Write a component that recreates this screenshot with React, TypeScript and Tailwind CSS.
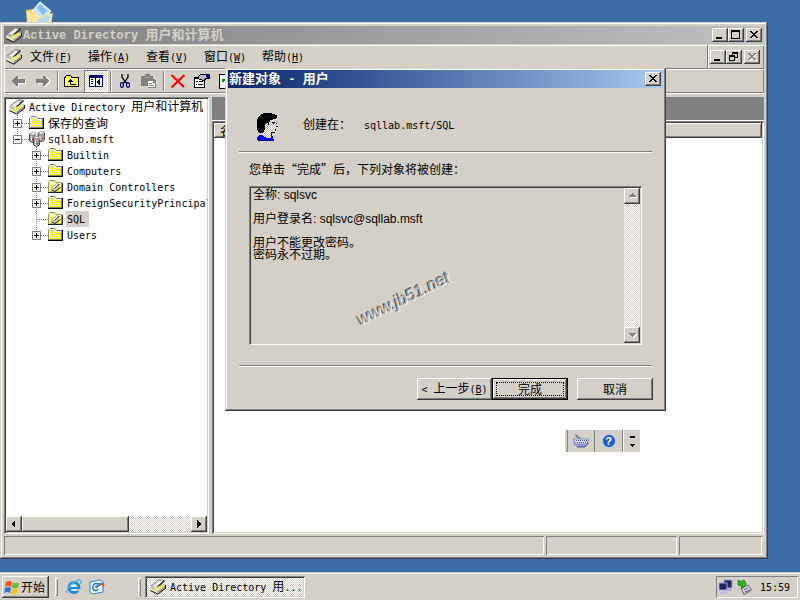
import type { ReactNode } from "react"

const RAISED = "bg-[#d4d0c8] shadow-[inset_-1px_-1px_#404040,inset_1px_1px_#fff,inset_-2px_-2px_#808080]"
const FRAME = "bg-[#d4d0c8] shadow-[inset_-1px_-1px_#404040,inset_1px_1px_#d4d0c8,inset_-2px_-2px_#808080,inset_2px_2px_#fff]"
const SUNKEN = "shadow-[inset_1px_1px_#808080,inset_-1px_-1px_#fff,inset_2px_2px_#404040,inset_-2px_-2px_#d4d0c8]"
const THIN_SUNKEN = "shadow-[inset_1px_1px_#808080,inset_-1px_-1px_#fff]"
const THIN_RAISED = "shadow-[inset_1px_1px_#fff,inset_-1px_-1px_#808080]"
const CHECKER = "bg-[repeating-conic-gradient(#fff_0_25%,#d4d0c8_0_50%)] bg-[length:2px_2px]"

// Latin runs are half the width of a Chinese character
function Text({ children, bold }: { children: string; bold?: boolean }) {
  return (
    <span className={bold ? "text-[13px] font-bold whitespace-pre" : "text-xs leading-4 whitespace-pre"}>
      {children.split(/([\x20-\x7e]+)/).map((part, i) =>
        i % 2 ? (
          <span key={i} className={bold ? "font-['Liberation_Mono',monospace] text-xs" : "font-['DejaVu_Sans_Mono',monospace] text-[10px]"}>
            {part}
          </span>
        ) : (
          part
        )
      )}
    </span>
  )
}

function Accel({ label, accel }: { label: string; accel: string }) {
  return (
    <span className="whitespace-nowrap">
      <Text>{label}</Text>
      <span className="font-['DejaVu_Sans_Mono',monospace] text-[10px]">
        (<u>{accel}</u>)
      </span>
    </span>
  )
}

function Svg({ children, size = "size-4", box = "0 0 16 16" }: { children: ReactNode; size?: string; box?: string }) {
  return (
    <svg viewBox={box} className={`${size} shrink-0`} shapeRendering="crispEdges" aria-hidden="true">
      {children}
    </svg>
  )
}

function DirectoryIcon() {
  return (
    <svg viewBox="0 0 16 16" className="size-4 shrink-0" aria-hidden="true">
      <path d="M1 7.500 9 1 14 1.500 7.500 8Z" fill="#c8c8c8" />
      <path d="M3 7 9.500 1.800 12.500 2 6 7.500Z" fill="#f4f4f4" />
      <path d="M1 7 9 .8 14 1.300" fill="none" stroke="#808080" />
      <path d="M14.500 1.500 7.500 8.200" stroke="#222" strokeWidth="1.300" />
      <path d="M0 9 2 7.500 7 9 13.500 5 15.500 6V9L8 15 0 11.500Z" fill="#b8b8b8" />
      <path d="M4 9.800 12.500 5.600 14.500 7 8 12Z" fill="#f2e83c" />
      <path d="M6 10.500 13 6.500M8 11 14 7" stroke="#fff" strokeWidth=".9" strokeDasharray="1 1" />
      <path d="M.5 9V11L7.500 14V12Z" fill="#f0f0f0" />
      <path d="M2.500 10.500 6.500 12.300" stroke="#f2e83c" />
      <path d="M8 12.500 15 7.500V9L8 14Z" fill="#909090" />
      <path d="M.5 11.700 7.800 15.200 15.500 9.300V6" fill="none" stroke="#111" />
    </svg>
  )
}

function FolderIcon() {
  return (
    <Svg>
      <pattern id="folder-hatch" width="2" height="2" patternUnits="userSpaceOnUse">
        <rect width="2" height="2" fill="#ff0" />
        <rect width="1" height="1" fill="#dcd8b0" />
        <rect x="1" y="1" width="1" height="1" fill="#dcd8b0" />
      </pattern>
      <path d="M0 3H1V2H2V1H7V2H8V3H14V13H0Z" fill="#808080" />
      <path d="M1 3H2V2H7V3H8V4H13V12H1Z" fill="#fff" />
      <path d="M2 3H7V5H13V12H2Z" fill="url(#folder-hatch)" />
      <path d="M0 13H14V3H15V14H0Z" fill="#000" />
    </Svg>
  )
}

function UnitIcon() {
  return (
    <svg viewBox="0 0 16 16" className="size-4 shrink-0" aria-hidden="true">
      <path d="M.5 12.500V3.500L2 1.500H7L8.500 3.500H13.500V13H.5Z" fill="#fbf48c" stroke="#9a9648" />
      <path d="M1.500 12V4.500H13" fill="none" stroke="#fffde0" />
      <path d="M0 13.500H14.500V4" fill="none" stroke="#222" />
      <path d="M3.500 9.500 8 5H11L12.500 8 7 12.500 3.500 11Z" fill="#d4d4d4" />
      <path d="M3.500 9 8 5H11L6.500 9.500Z" fill="#fff" stroke="#777" strokeWidth=".6" />
      <path d="M11.300 5 6.800 9.500M3.500 11 7 12.500 12.500 8.500" fill="none" stroke="#222" />
      <path d="M7 10.500 11 7.500" stroke="#e8d800" strokeWidth="1.200" />
    </svg>
  )
}

function DomainIcon() {
  return (
    <svg viewBox="0 0 16 16" className="size-4 shrink-0" aria-hidden="true">
      {["M.5 3V10L3 11.500 6 10.500V3Z", "M9 2V9L12 11 15.500 9V2Z", "M4.500 6.500V14L7.500 15.500 10.500 14V6.500Z"].map((d) => (
        <path key={d} d={d} fill="#a0a0a0" stroke="#333" strokeWidth=".8" />
      ))}
      <path d="M.5 3 3 1H6.500V3L4 4.500ZM9 2 12 .5 15.500 1V2L12 3.500ZM4.500 6.500 7 5 10.500 6.500 8 8Z" fill="#eee" stroke="#777" strokeWidth=".6" />
      <path d="M2.500 5V10M6.500 9V14M11 5V9" stroke="#e8e8e8" />
      <path d="M3 8.500H4.500M8 12.500H9.500M13 7.500H14" stroke="#d00" />
    </svg>
  )
}

type Glyph = "min" | "max" | "restore" | "close"
const GLYPHS: Record<Glyph, ReactNode> = {
  min: <path d="M4 9H10V11H4Z" />,
  max: <path fillRule="evenodd" d="M3 2H12V11H3ZM4 4H11V10H4Z" />,
  restore: <path fillRule="evenodd" d="M6 2H12V8H9V11H3V5H6ZM7 4V5H9V7H11V4ZM4 7V10H8V7Z" />,
  close: <path d="M4 3H6V4H7V5H9V4H10V3H12V4H11V5H10V6H9V7H10V8H11V9H12V10H10V9H9V8H7V9H6V10H4V9H5V8H6V7H7V6H6V5H5V4H4Z" />,
}

function CaptionButton({ glyph, label, disabled }: { glyph: Glyph; label: string; disabled?: boolean }) {
  return (
    <button aria-label={label} disabled={disabled} className={`h-3.5 w-4 shrink-0 ${RAISED}`}>
      <svg viewBox="0 0 16 14" className="h-3.5 w-4" shapeRendering="crispEdges">
        {disabled && <g fill="#fff" transform="translate(1 1)">{GLYPHS[glyph]}</g>}
        <g fill={disabled ? "#808080" : "#000"}>{GLYPHS[glyph]}</g>
      </svg>
    </button>
  )
}

function ScrollButton({ points, label, disabled }: { points: string; label: string; disabled?: boolean }) {
  return (
    <button aria-label={label} disabled={disabled} className={`size-4 shrink-0 ${RAISED}`}>
      <Svg>
        {disabled && <polygon points={points} fill="#fff" transform="translate(1 1)" />}
        <polygon points={points} fill={disabled ? "#808080" : "#000"} />
      </Svg>
    </button>
  )
}

const MENUS = [
  ["文件", "F"],
  ["操作", "A"],
  ["查看", "V"],
  ["窗口", "W"],
  ["帮助", "H"],
]

function ToolButton({ label, pressed, children }: { label: string; pressed?: boolean; children: ReactNode }) {
  return (
    <button
      aria-label={label}
      className={`flex h-[22px] w-6 shrink-0 items-center justify-center ${pressed ? `${CHECKER} ${THIN_SUNKEN}` : ""}`}
    >
      {children}
    </button>
  )
}

function Divider() {
  return <div className="mx-[2px] h-5 w-px shrink-0 bg-[#808080] shadow-[1px_0_#fff]" />
}

function Toolbar() {
  return (
    <div className={`flex h-[25px] items-center overflow-hidden border-b border-white pl-[3px] ${THIN_RAISED}`}>
      <ToolButton label="后退">
        <Svg>
          <path d="M3 9H2V8H7V4H8V7H15V11H8V14H7V13H6V12H5V11H4V10H3Z" fill="#fff" />
          <path d="M1 8V7H2V6H3V5H4V4H5V3H7V6H14V10H7V13H5V12H4V11H3V10H2V9H1Z" fill="#808080" />
        </Svg>
      </ToolButton>
      <ToolButton label="前进">
        <Svg>
          <path d="M3 7H10V4H12V5H13V6H14V7H15V10H14V11H13V12H12V13H11V14H9V11H3Z" fill="#fff" />
          <path d="M14 8V7H13V6H12V5H11V4H10V3H8V6H1V10H8V13H10V12H11V11H12V10H13V9H14Z" fill="#808080" />
        </Svg>
      </ToolButton>
      <Divider />
      <ToolButton label="上一级">
        <Svg>
          <path d="M1 4H2V3H3V2H7V3H8V4H15V13H1Z" fill="#ff6" />
          <path fillRule="evenodd" d="M2 3V2H7V3H8V4H15V14H0V4H1V3ZM1 5V13H14V5H7V3H2V5Z" fill="#000" />
          <path d="M6 6H7V7H8V8H9V9H7V11H12V12H6V9H4V8H5V7H6Z" fill="#000" />
        </Svg>
      </ToolButton>
      <ToolButton label="显示/隐藏控制台树" pressed>
        <Svg>
          <path d="M1 2H15V14H1Z" fill="#00007b" />
          <path d="M2 5H7V13H2ZM8 5H14V13H8Z" fill="#fff" />
          <path d="M3 6H5V7H3ZM3 8H5V9H3ZM3 10H5V11H3ZM12 6V12H11V11H10V10H9V8H10V7H11V6Z" fill="#000" />
        </Svg>
      </ToolButton>
      <Divider />
      <ToolButton label="剪切">
        <svg viewBox="0 0 16 16" className="size-4" aria-hidden="true">
          <path d="M5 1V4L9 10M11 1V4L7 10" fill="none" stroke="#000" strokeWidth="1.300" />
          <ellipse cx="5" cy="12" rx="1.500" ry="2.300" fill="none" stroke="#00007b" strokeWidth="1.200" />
          <ellipse cx="11" cy="12" rx="1.500" ry="2.300" fill="none" stroke="#00007b" strokeWidth="1.200" />
          <path d="M6 10 8 8 10 10" fill="none" stroke="#00007b" />
        </svg>
      </ToolButton>
      <ToolButton label="粘贴">
        <Svg>
          <path d="M0 3H4V1H9V3H12V6H14V7H15V15H7V13H0Z" fill="#808080" />
          <path d="M4 4H9V5H4Z" fill="#aaa" />
          <path d="M7 8H12V10H14V14H7Z" fill="#fff" />
          <path d="M8 10H11V11H8ZM8 12H13V13H8Z" fill="#808080" />
        </Svg>
      </ToolButton>
      <Divider />
      <ToolButton label="删除">
        <svg viewBox="0 0 16 16" className="size-4" aria-hidden="true">
          <path d="M1.500 2 14 14M14.500 2 1.500 14.500" fill="none" stroke="#f00" strokeWidth="2" />
        </svg>
      </ToolButton>
      <ToolButton label="属性">
        <Svg>
          <path fillRule="evenodd" d="M0 4H6V5H11V15H0ZM1 6V14H10V6Z" fill="#000" />
          <path d="M1 6H10V14H1Z" fill="#fff" />
          <path d="M2 8H4V9H2ZM5 8H9V9H5ZM2 11H3V12H2ZM4 11H9V12H4Z" fill="#000" />
          <path d="M4 4 7 1H13V5L9 8 7 6H5Z" fill="#bbb" stroke="#000" />
          <path d="M12 1H16V6H13Z" fill="#00007b" />
        </Svg>
      </ToolButton>
      <ToolButton label="刷新">
        <Svg>
          <path d="M1 1H11L14 4V15H1Z" fill="#fff" stroke="#000" />
          <path d="M4 9V6H9V4L12 7 9 10V8H6V9Z" fill="#080" />
        </Svg>
      </ToolButton>
    </div>
  )
}

interface Node {
  name: string
  icon: "folder" | "unit" | "domain"
  level: 1 | 2
  box?: "+" | "-"
  selected?: boolean
}

const NODES: Node[] = [
  { name: "保存的查询", icon: "folder", level: 1, box: "+" },
  { name: "sqllab.msft", icon: "domain", level: 1, box: "-" },
  { name: "Builtin", icon: "folder", level: 2, box: "+" },
  { name: "Computers", icon: "folder", level: 2, box: "+" },
  { name: "Domain Controllers", icon: "unit", level: 2, box: "+" },
  { name: "ForeignSecurityPrincipals", icon: "folder", level: 2, box: "+" },
  { name: "SQL", icon: "unit", level: 2, selected: true },
  { name: "Users", icon: "folder", level: 2, box: "+" },
]

function TreeRow({ node, last }: { node: Node; last: boolean }) {
  return (
    <li className={`flex h-4 items-center ${node.level === 1 ? "pl-[6px]" : "pl-[25px]"}`}>
      <svg viewBox="0 0 17 16" className="h-4 w-[17px] shrink-0" shapeRendering="crispEdges" aria-hidden="true">
        <path d={last || node.box === "-" ? "M5.500 0V8" : "M5.500 0V16"} stroke="#808080" strokeDasharray="1 1" />
        <path d="M6 8.500H17" stroke="#808080" strokeDasharray="1 1" />
        {node.box && (
          <>
            <rect x="1.500" y="4.500" width="8" height="8" fill="#fff" stroke="#808080" />
            <path d={node.box === "+" ? "M3 8.500H8M5.500 6V11" : "M3 8.500H8"} stroke="#000" />
          </>
        )}
      </svg>
      {node.icon === "unit" ? <UnitIcon /> : node.icon === "domain" ? <DomainIcon /> : <FolderIcon />}
      <a href="#" className={`ml-[2px] flex h-4 items-center pr-1 pl-px ${node.selected ? "bg-[#d4d0c8]" : ""}`}>
        <Text>{node.name}</Text>
      </a>
    </li>
  )
}

function Tree() {
  return (
    <div className={`flex w-[205px] shrink-0 flex-col bg-white p-[2px] ${SUNKEN}`}>
      <ul className="flex-1 overflow-hidden">
        <li className="flex h-4 items-center gap-1 pl-[3px]">
          <DirectoryIcon />
          <Text>Active Directory 用户和计算机</Text>
        </li>
        {NODES.map((node, i) => (
          <TreeRow key={node.name} node={node} last={i === NODES.length - 1} />
        ))}
      </ul>
      <div className={`flex h-4 ${CHECKER}`}>
        <ScrollButton label="向左滚动" points="5,8 9,4 9,12" />
        <div className={`w-[107px] ${RAISED}`} />
        <div className="flex-1" />
        <ScrollButton label="向右滚动" points="6,4 10,8 6,12" />
      </div>
    </div>
  )
}

function ConsoleWindow() {
  return (
    <section className={`flex flex-1 flex-col p-1 ${FRAME}`}>
      <header className="flex h-[18px] shrink-0 items-center bg-linear-to-r from-[#808080] to-[#c0c0c0] pr-[2px] pl-[2px] text-[#d4d0c8]">
        <DirectoryIcon />
        <h1 className="ml-px flex-1 leading-4">
          <Text bold>Active Directory 用户和计算机</Text>
        </h1>
        <CaptionButton glyph="min" label="最小化" />
        <CaptionButton glyph="max" label="最大化" />
        <div className="w-[2px]" />
        <CaptionButton glyph="close" label="关闭" />
      </header>
      <div className={`mt-px flex h-6 shrink-0 items-center pl-[2px] ${THIN_RAISED}`}>
        <DirectoryIcon />
        <nav className="flex flex-1">
          {MENUS.map(([label, accel]) => (
            <button key={accel} className="w-[58px]">
              <Accel label={label} accel={accel} />
            </button>
          ))}
        </nav>
        <div className="flex h-full items-center pr-1 pl-[2px] shadow-[inset_1px_0_#fff,-1px_0_#808080]">
          <CaptionButton glyph="min" label="最小化子窗口" />
          <CaptionButton glyph="restore" label="还原子窗口" />
          <div className="w-[2px]" />
          <CaptionButton glyph="close" label="关闭子窗口" disabled />
        </div>
      </div>
      <Toolbar />
      <div className="mt-[3px] flex min-h-0 flex-1 gap-[3px]">
        <Tree />
        <div className="flex flex-1 flex-col">
          <div className="h-6 border-b border-white bg-[#808080]" />
          <div className={`flex-1 bg-white p-[2px] ${SUNKEN}`}>
            <table className="w-full border-collapse">
              <thead>
                <tr>
                  <th className={`h-[15px] p-0 pl-1.5 text-left font-normal ${RAISED}`}>
                    <div className="h-[15px] overflow-hidden leading-3">
                      <Text>名称</Text>
                    </div>
                  </th>
                </tr>
              </thead>
            </table>
          </div>
        </div>
      </div>
      <footer className="mt-[2px] flex h-[19px] shrink-0 gap-[2px] pr-[2px]">
        <div className={`flex-1 ${THIN_SUNKEN}`} />
        <div className={`w-[131px] ${THIN_SUNKEN}`} />
        <div className={`w-[83px] ${THIN_SUNKEN}`} />
      </footer>
    </section>
  )
}

function UserIcon() {
  return (
    <Svg size="h-8 w-6" box="0 0 24 32">
      <pattern id="skin" width="2" height="2" patternUnits="userSpaceOnUse">
        <rect width="2" height="2" fill="#fff" />
        <rect width="1" height="1" fill="#c0c0c0" />
        <rect x="1" y="1" width="1" height="1" fill="#c0c0c0" />
      </pattern>
      <path d="M10 8H21V14H22V17H21V22H17V27L12 28 7 26V20Z" fill="url(#skin)" />
      <path d="M8 3H17V4H20V5H22V8H21V9H18V10H15V12H14V15H13V13H11V14H10V20H9V22H8V23H4V22H3V20H2V9H3V7H4V6H5V5H6V4H8Z" fill="#000" />
      <path d="M21 13H22V16H23V17H21V16H22V14H21ZM20 19H21V21H20ZM16 22H20V23H16ZM17 12H20V13H17Z" fill="#000" />
      <path d="M18 13H19V14H18ZM3 26H4V25H8V26H9V27H11V28H16V26H18V29H19V31H3V30H2V27H3Z" fill="#00f" />
      <path d="M16 22H17V27H16ZM3 30H19V31H3Z" fill="#000080" />
    </Svg>
  )
}

const SUMMARY = "全称: sqlsvc\n\n用户登录名: sqlsvc@sqllab.msft\n\n用户不能更改密码。\n密码永不过期。"

function Rule() {
  return <hr className="-mx-[10px] h-[2px] border-t border-b border-t-[#808080] border-b-white" />
}

function NewUserDialog() {
  return (
    <section role="dialog" aria-labelledby="dialog-title" className={`absolute top-[68px] left-[225px] w-[441px] p-[2px] ${FRAME}`}>
      <header className="mx-px flex h-[18px] items-center bg-linear-to-r from-[#0a246a] to-[#a6caf0] pr-[2px] pl-px text-white">
        <h2 id="dialog-title" className="flex-1 leading-4">
          <Text bold>新建对象 - 用户</Text>
        </h2>
        <CaptionButton glyph="close" label="关闭对话框" />
      </header>
      <div className="px-[22px] pt-[22px] pb-[9px]">
        <div className="flex h-8 items-start pl-[6px]">
          <UserIcon />
          <dl className="ml-6 flex gap-[13px] pt-[6px]">
            <dt>
              <Text>创建在：</Text>
            </dt>
            <dd>
              <Text>sqllab.msft/SQL</Text>
            </dd>
          </dl>
        </div>
        <div className="pt-[9px]">
          <Rule />
        </div>
        <label htmlFor="summary" className="mt-2 block h-4 leading-4">
          <Text>您单击“完成”后，下列对象将被创建：</Text>
        </label>
        <div className={`relative mt-[9px] flex h-[159px] p-[2px] ${SUNKEN}`}>
          <textarea
            id="summary"
            readOnly
            value={SUMMARY}
            className="flex-1 resize-none overflow-hidden bg-transparent px-[2px] py-px font-['Liberation_Sans','Noto_Sans_CJK_SC',sans-serif] text-xs leading-3 outline-none"
          />
          <div className={`flex w-4 flex-col justify-between ${CHECKER}`}>
            <ScrollButton label="向上滚动" points="8,5 12,9 4,9" disabled />
            <ScrollButton label="向下滚动" points="4,6 12,6 8,10" disabled />
          </div>
          <span className="pointer-events-none absolute top-[103px] left-[104px] -rotate-[26deg] font-['Liberation_Sans',sans-serif] text-[17px] leading-5 text-[#a8a4a0] italic [text-shadow:1px_1px_#f4f2ee,-1px_-1px_#505050]">
            www.jb51.net
          </span>
        </div>
        <div className="pt-5">
          <Rule />
        </div>
        <div className="-mr-[11px] mt-[11px] flex justify-end">
          <button className={`h-[22px] w-[75px] ${RAISED}`}>
            <Text>{"< "}</Text>
            <Accel label="上一步" accel="B" />
          </button>
          <button className={`h-[22px] w-[76px] border border-black p-[3px] ${RAISED}`}>
            <span className="flex h-full items-center justify-center border border-dotted border-black">
              <Text>完成</Text>
            </span>
          </button>
          <button className={`ml-[9px] h-[22px] w-[76px] ${RAISED}`}>
            <Text>取消</Text>
          </button>
        </div>
      </div>
    </section>
  )
}

function LanguageBar() {
  return (
    <div className="absolute top-[430px] left-[564px] flex h-[22px] bg-[#d4d0c8] pl-[3px] shadow-[inset_1px_0_#fff]">
      <button aria-label="键盘" className="flex w-7 items-center justify-center border-r border-l border-r-[#808080] border-l-[#808080]">
        <svg viewBox="0 0 16 16" className="size-4">
          <path d="M7 6C6 3 3 5 3 1.500" fill="none" stroke="#777" strokeWidth="1.500" />
          <path d="M.5 6.500H15.500V10L12 14H4L.5 11Z" fill="#8f95d8" />
          <path d="M.5 6H15.500L14 11H2.500Z" fill="#dcdffa" stroke="#7a80c8" strokeWidth=".8" />
          <path d="M3 7.500H14M4 9.500H13" stroke="#444a8c" strokeDasharray="1 1" />
          <path d="M4 14H12L15.500 10" fill="none" stroke="#4c5080" />
        </svg>
      </button>
      <button aria-label="帮助" className="flex w-7 items-center justify-center border-r border-[#808080]">
        <span className="flex size-3.5 items-center justify-center rounded-full border border-[#b8cdf4] bg-[#1c5bd4] font-['Liberation_Sans',sans-serif] text-[11px] leading-3 font-bold text-white">
          ?
        </span>
      </button>
      <button aria-label="选项" className="w-[17px] border-l border-white">
        <svg viewBox="0 0 16 22" className="h-[22px] w-4" shapeRendering="crispEdges">
          <path d="M6 6H11V8H6ZM6 14H11V15H10V16H9V17H8V16H7V15H6Z" />
        </svg>
      </button>
    </div>
  )
}

function Grip() {
  return <div className={`h-[18px] w-[3px] shrink-0 ${THIN_RAISED}`} />
}

function Taskbar() {
  return (
    <footer className="flex h-7 shrink-0 items-center bg-[#d4d0c8] px-[2px] pt-[2px] shadow-[inset_0_1px_#d4d0c8,inset_0_2px_#fff]">
      <button className={`flex h-[22px] w-[47px] items-center gap-px pl-[2px] ${RAISED}`}>
        <svg viewBox="0 0 16 16" className="size-4 shrink-0" aria-hidden="true">
          <path d="M2 3Q5 1 8 3L7 8Q4 6 1 8Z" fill="#ee5522" />
          <path d="M9 3.500Q12 5 15 3.500L14 8.500Q11 10 8 8.500Z" fill="#70b82c" />
          <path d="M1 9Q4 7 7 9L6 14Q3 12 0 14Z" fill="#3a73e0" />
          <path d="M8 9.500Q11 11 14 9.500L13 14.500Q10 16 7 14.500Z" fill="#f6c61e" />
        </svg>
        <Text>开始</Text>
      </button>
      <div className="ml-[6px] flex w-[83px] items-center">
        <Grip />
        <button aria-label="Internet Explorer" className="ml-2">
          <svg viewBox="0 0 16 16" className="size-4">
            <circle cx="8" cy="8.500" r="5" fill="#d8f1fd" stroke="#2187d8" strokeWidth="3" />
            <path d="M4 9H14" stroke="#2187d8" strokeWidth="2" />
            <path d="M10 10.300H16V12H10Z" fill="#d4d0c8" />
            <path d="M1 14C-1 9 11-1 15 1.500 16 3 15 4 14 5" fill="none" stroke="#53b5ee" strokeWidth="1.300" />
          </svg>
        </button>
        <button aria-label="Outlook Express" className="ml-[7px]">
          <svg viewBox="0 0 16 16" className="size-4">
            <path d="M1 3 11 1 14 3V13L4 15 1 13Z" fill="#f4faff" stroke="#2b7fd0" />
            <path d="M10 5C5 3 3 7 4 10 6 13 9 11 9 10M6 8 12 4" fill="none" stroke="#1f78c8" strokeWidth="1.500" />
            <path d="M7 9 14 4" stroke="#3f3f3f" />
            <circle cx="14" cy="6" r="1.500" fill="#e0561c" />
          </svg>
        </button>
      </div>
      <Grip />
      <button className={`ml-1 flex h-[22px] w-40 items-center gap-1 pl-[5px] ${CHECKER} ${SUNKEN}`}>
        <DirectoryIcon />
        <Text>Active Directory 用...</Text>
      </button>
      <div className="flex-1" />
      <div className={`flex h-[22px] w-[82px] items-center gap-[2px] pl-[2px] ${THIN_SUNKEN}`}>
        <svg viewBox="0 0 16 16" className="size-4 shrink-0" aria-hidden="true">
          <path d="M6 1H14V9H6Z" fill="#20285c" stroke="#9a9ee0" />
          <path d="M9 10H14V12H9Z" fill="#a8aae0" />
          <path d="M1 4H9V11H1Z" fill="#20285c" stroke="#a8aae8" />
          <path d="M4 12H7V13H9V15H2V13H4Z" fill="#b8bae8" />
        </svg>
        <svg viewBox="0 0 16 16" className="size-4 shrink-0" aria-hidden="true">
          <path d="M5 9 12 6 15.500 11 8 15.500Z" fill="#d0d0d8" stroke="#666" />
          <path d="M8 11 12 9M9 13 14 11" stroke="#667" />
          <path d="M2 1 5 2.500 8 1 10 4 8.500 8 5 9.500 6 7 2 6Z" fill="#25b81c" stroke="#157010" strokeWidth=".7" />
        </svg>
        <time className="ml-[6px]">
          <Text>15:59</Text>
        </time>
      </div>
    </footer>
  )
}

export default function App() {
  return (
    <div
      lang="zh-CN"
      className="flex h-screen flex-col overflow-hidden bg-[#3a6ea5] font-['Noto_Sans_CJK_SC',sans-serif] text-xs leading-4 text-black"
    >
      <main className="relative flex min-h-0 flex-1 pt-[22px] pr-8 pb-[13px]">
        <svg viewBox="0 0 28 22" className="absolute top-0 left-[26px] h-[22px] w-7" aria-hidden="true">
          <path d="M0 10 8 9 12 12 24 12 26 24H1Z" fill="#f3cd63" />
          <path d="M6 11 14 2 25 11 17 20Z" fill="#c6e6fb" stroke="#fff" />
          <path d="M11 8 14 4 21 11 17 15Z" fill="#80bdf0" />
          <path d="M1 12 9 11 13 17 27 13 25 24H2Z" fill="#fbe59a" />
          <path d="M13 18 25 15 22 22H11Z" fill="#b6dbee" />
        </svg>
        <ConsoleWindow />
        <NewUserDialog />
        <LanguageBar />
      </main>
      <Taskbar />
    </div>
  )
}
